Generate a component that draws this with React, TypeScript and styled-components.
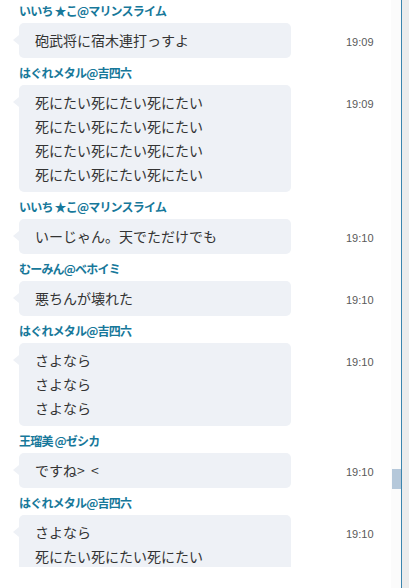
import styled, { createGlobalStyle } from "styled-components";

type Message = {
    name: string;
    lines: string[];
    time: string;
};

const messages: Message[] = [
    { name: "いいち ★こ@マリンスライム", lines: ["砲武将に宿木連打っすよ"], time: "19:09" },
    {
        name: "はぐれメタル@吉四六",
        lines: ["死にたい死にたい死にたい", "死にたい死にたい死にたい", "死にたい死にたい死にたい", "死にたい死にたい死にたい"],
        time: "19:09",
    },
    { name: "いいち ★こ@マリンスライム", lines: ["いーじゃん。天でただけでも"], time: "19:10" },
    { name: "むーみん@ベホイミ", lines: ["悪ちんが壊れた"], time: "19:10" },
    { name: "はぐれメタル@吉四六", lines: ["さよなら", "さよなら", "さよなら"], time: "19:10" },
    { name: "王瑠美 @ゼシカ", lines: ["ですね>  <"], time: "19:10" },
    { name: "はぐれメタル@吉四六", lines: ["さよなら", "死にたい死にたい死にたい"], time: "19:10" },
];

const App = () => {
    return (
        <Frame>
            <GlobalStyle />
            <Pane>
                <ChatList>
                    {messages.map((m, i) => (
                        <MessageBlock key={i}>
                            <Name>{m.name}</Name>
                            <Row>
                                <Bubble>
                                    {m.lines.map((line, j) => (
                                        <Line key={j}>{line}</Line>
                                    ))}
                                </Bubble>
                                <Time>{m.time}</Time>
                            </Row>
                        </MessageBlock>
                    ))}
                </ChatList>
                <ScrollTrack>
                    <Thumb $top={469} />
                </ScrollTrack>
            </Pane>
            <Divider />
            <SideStrip />
        </Frame>
    );
};

const GlobalStyle = createGlobalStyle`
    body {
        margin: 0;
        background: #ffffff;
        font-family: "Liberation Sans", "Noto Sans CJK JP", sans-serif;
    }
`;

const Frame = styled.div`
    display: flex;
    width: 409px;
    height: 588px;
    background: #ffffff;
`;

const Pane = styled.div`
    flex: 1;
    display: flex;
    min-width: 0;
`;

const ChatList = styled.div`
    flex: 1;
    height: 567px;
    overflow: hidden;
    padding-left: 19px;
`;

const MessageBlock = styled.div`
    padding-top: 6px;
    &:first-child {
        padding-top: 2px;
    }
`;

const Name = styled.div`
    font-family: "Noto Sans CJK JP", sans-serif;
    font-size: 12px;
    font-weight: bold;
    line-height: 18px;
    letter-spacing: -0.8px;
    color: #17789a;
    margin-bottom: 3px;
    white-space: pre;
`;

const Row = styled.div`
    display: flex;
    align-items: flex-start;
`;

const Bubble = styled.div`
    position: relative;
    width: 272px;
    box-sizing: border-box;
    padding: 5px 16px 6px;
    background: #eef1f6;
    border-radius: 5px;
    font-family: "Noto Sans CJK JP", sans-serif;
    font-size: 14px;
    line-height: 24px;
    color: #333333;

    &::before {
        content: "";
        position: absolute;
        left: -6px;
        top: 12px;
        border-top: 5px solid transparent;
        border-bottom: 5px solid transparent;
        border-right: 6px solid #eef1f6;
    }
`;

const Line = styled.div`
    white-space: pre;
`;

const Time = styled.div`
    margin-left: 55px;
    padding-top: 13px;
    font-size: 11px;
    line-height: 12px;
    color: #5a5a5a;
`;

const ScrollTrack = styled.div`
    width: 10px;
    background: #fbfbfb;
`;

const Thumb = styled.div<{ $top: number }>`
    margin-top: ${(p) => p.$top}px;
    margin-left: 1px;
    width: 9px;
    height: 20px;
    background: #b5c8da;
`;

const Divider = styled.div`
    width: 1px;
    background: #3c85ae;
`;

const SideStrip = styled.div`
    width: 7px;
    background: #ececec;
`;

export default App;
